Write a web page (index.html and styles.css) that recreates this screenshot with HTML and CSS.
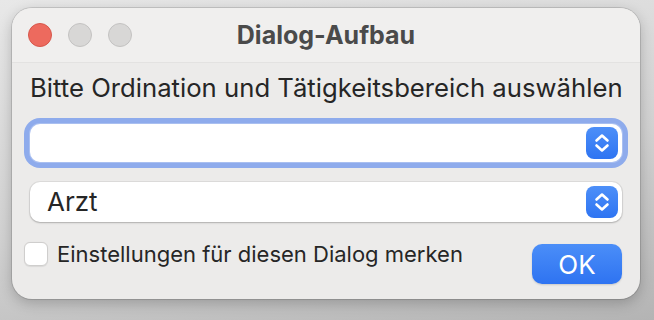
FILE: index.html
```html
<!DOCTYPE html>
<html lang="de">
<head>
<meta charset="utf-8">
<title>Dialog-Aufbau</title>
<link rel="stylesheet" href="styles.css">
</head>
<body>
<div class="window">
  <div class="titlebar">
    <div class="lights">
      <span class="light red"></span>
      <span class="light grey"></span>
      <span class="light grey"></span>
    </div>
    <div class="title">Dialog-Aufbau</div>
  </div>
  <div class="content">
    <div class="prompt">Bitte Ordination und Tätigkeitsbereich auswählen</div>
    <div class="popup focused">
      <span class="popup-label"></span>
      <span class="stepper">
        <svg width="32" height="32" viewBox="0 0 32 32"><path d="M10.5 13.5 L16 8.5 L21.5 13.5 M10.5 18.5 L16 23.5 L21.5 18.5" fill="none" stroke="#fff" stroke-width="2.6" stroke-linecap="round" stroke-linejoin="round"/></svg>
      </span>
    </div>
    <div class="popup">
      <span class="popup-label">Arzt</span>
      <span class="stepper">
        <svg width="32" height="32" viewBox="0 0 32 32"><path d="M10.5 13.5 L16 8.5 L21.5 13.5 M10.5 18.5 L16 23.5 L21.5 18.5" fill="none" stroke="#fff" stroke-width="2.6" stroke-linecap="round" stroke-linejoin="round"/></svg>
      </span>
    </div>
    <div class="bottom">
      <label class="check">
        <span class="box"></span>
        <span class="check-label">Einstellungen für diesen Dialog merken</span>
      </label>
      <button class="ok">OK</button>
    </div>
  </div>
</div>
</body>
</html>
```

FILE: styles.css
```css
html, body {
  margin: 0;
  padding: 0;
}
body {
  width: 654px;
  height: 320px;
  overflow: hidden;
  background: linear-gradient(170deg, #e8e8e8 0%, #d2d2d2 55%, #b4b4b4 100%);
  font-family: "Inter", "Liberation Sans", sans-serif;
  color: #262626;
}
.window {
  margin: 8px 0 0 12px;
  width: 628px;
  height: 291px;
  border-radius: 20px;
  background: #ecebea;
  box-shadow: 0 0 0 1px rgba(0,0,0,0.12), 0 4px 14px rgba(0,0,0,0.22);
  overflow: hidden;
  display: flex;
  flex-direction: column;
}
.titlebar {
  height: 55px;
  flex: none;
  background: #f0efee;
  border-bottom: 1px solid #e3e2e1;
  box-sizing: border-box;
  display: flex;
  align-items: center;
  position: relative;
}
.lights {
  display: flex;
  gap: 16px;
  padding-left: 16px;
}
.light {
  width: 24px;
  height: 24px;
  border-radius: 50%;
  box-sizing: border-box;
}
.light.red {
  background: #ed6a5e;
  border: 1px solid #d6574b;
}
.light.grey {
  background: #d8d7d6;
  border: 1px solid #c3c2c1;
}
.title {
  position: absolute;
  left: 0;
  right: 0;
  top: 0;
  bottom: 0;
  display: flex;
  align-items: center;
  justify-content: center;
  font-weight: 700;
  font-size: 25px;
  color: #4a4a4a;
  pointer-events: none;
}
.content {
  padding: 9px 18px 0 18px;
  display: flex;
  flex-direction: column;
}
.prompt {
  font-size: 25.7px;
  line-height: 32px;
  height: 32px;
  white-space: nowrap;
}
.popup {
  margin-top: 20px;
  height: 40px;
  width: 592px;
  box-sizing: border-box;
  background: #fff;
  border-radius: 10px;
  box-shadow: 0 0 0 1px rgba(0,0,0,0.06), 0 1px 2px rgba(0,0,0,0.22);
  display: flex;
  align-items: center;
  justify-content: space-between;
  padding: 0 4px 0 17px;
}
.popup.focused {
  height: 38px;
  box-shadow: 0 0 0 1px #a9bff0, 0 0 0 6px #8eabec;
}
.popup-label {
  font-size: 26px;
  line-height: 32px;
}
.stepper {
  width: 32px;
  height: 32px;
  border-radius: 8px;
  background: linear-gradient(#4d8ff8, #2e74f2);
  display: flex;
}
.bottom {
  margin-top: 20px;
  margin-left: -6px;
  display: flex;
  justify-content: space-between;
  align-items: flex-start;
}
.check {
  display: flex;
  align-items: center;
  gap: 9px;
}
.box {
  width: 24px;
  height: 24px;
  box-sizing: border-box;
  border-radius: 6px;
  background: #fff;
  border: 1px solid #cfcecd;
  box-shadow: 0 0.5px 1px rgba(0,0,0,0.08);
}
.check-label {
  font-size: 22px;
  line-height: 24px;
}
.ok {
  margin-top: 2px;
  width: 90px;
  height: 40px;
  border: none;
  border-radius: 10px;
  background: linear-gradient(#4b8ef8, #2e73f1);
  color: #fff;
  font-family: "Inter", "Liberation Sans", sans-serif;
  font-size: 26px;
  padding: 0;
  box-shadow: 0 1px 2px rgba(0,0,0,0.15);
}
```
